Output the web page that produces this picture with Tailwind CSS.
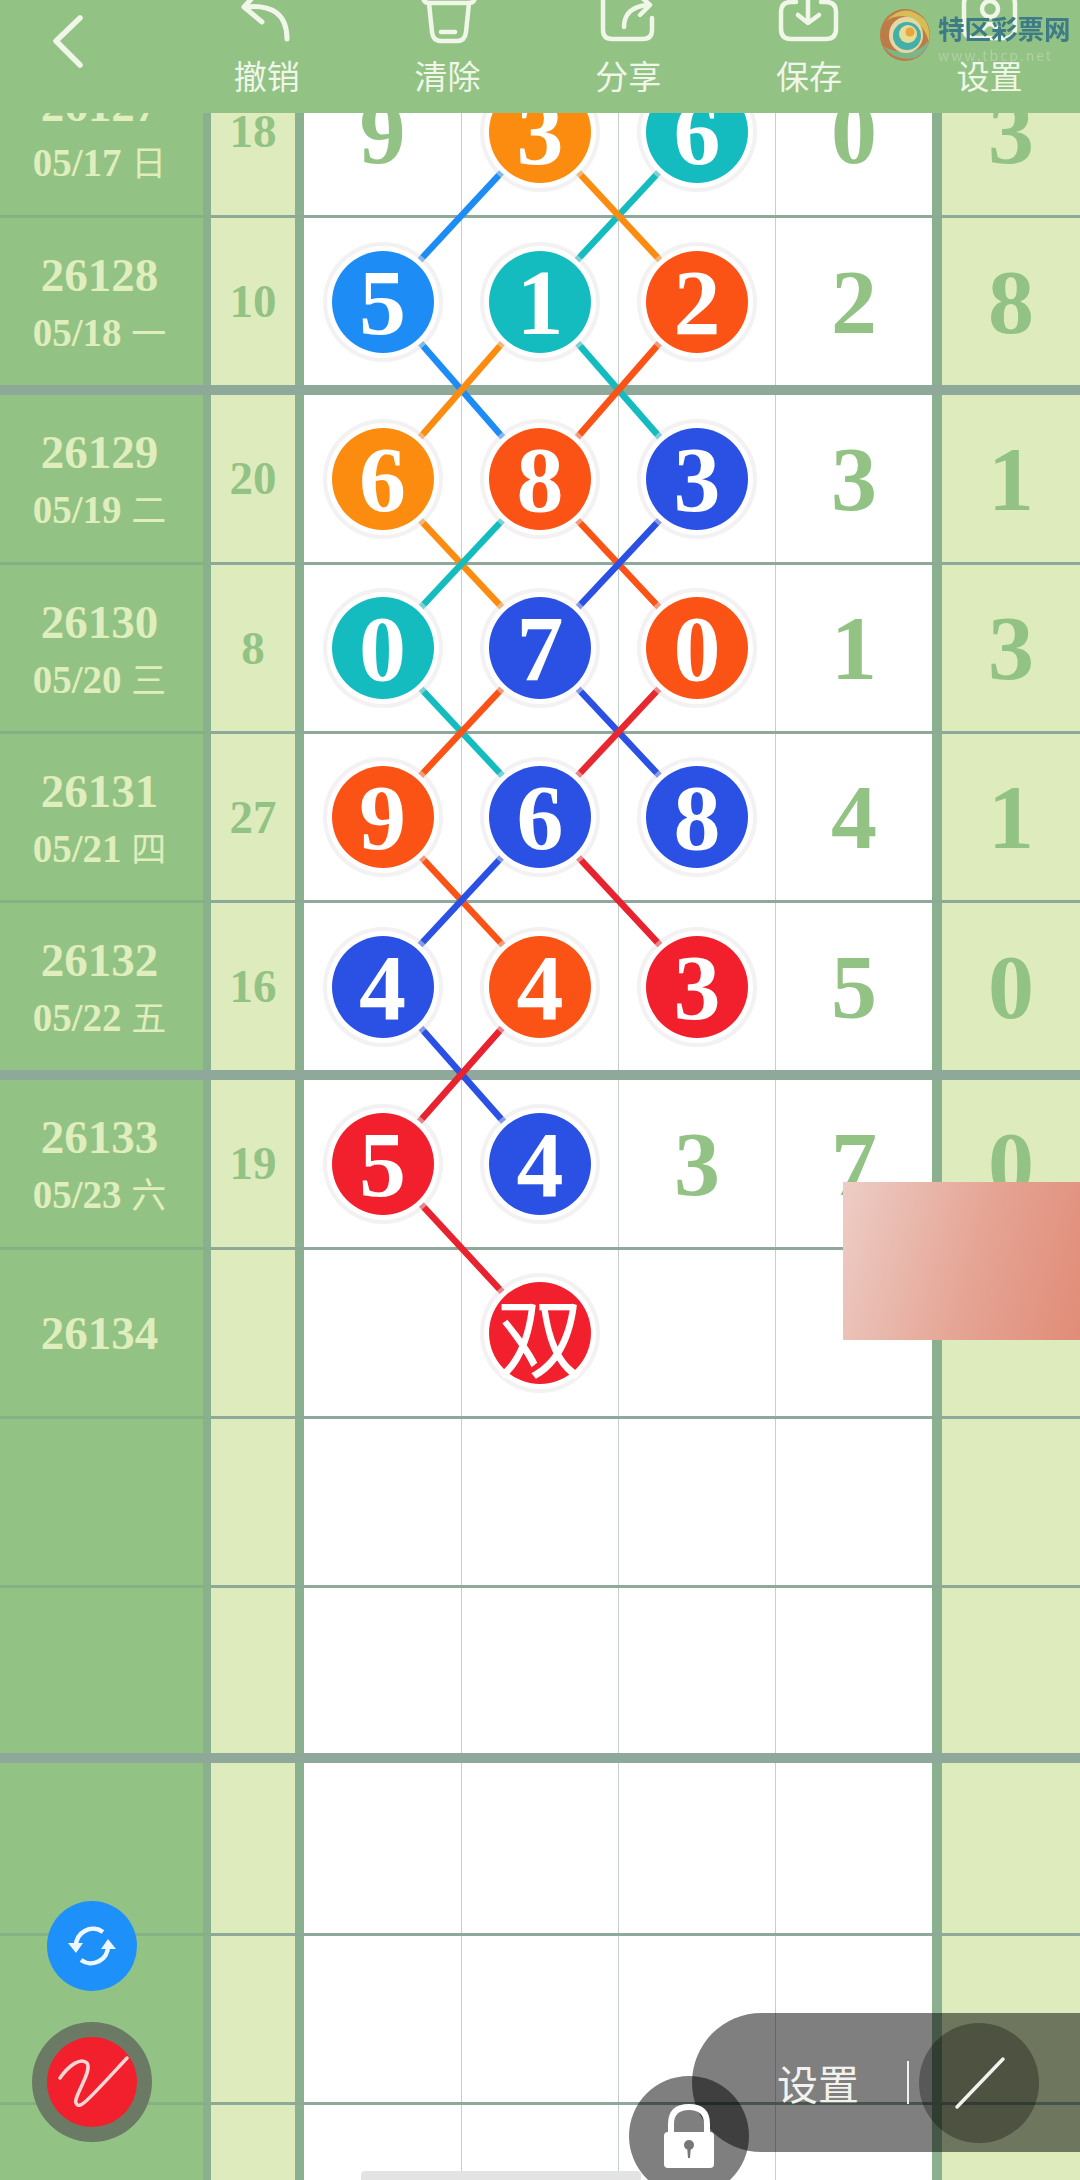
<!DOCTYPE html>
<html lang="zh">
<head>
    <meta charset="UTF-8">
    <meta name="viewport" content="width=device-width, initial-scale=1.0">
    <title>走势图</title>
    <script src="https://cdn.jsdelivr.net/npm/@tailwindcss/browser@4"></script>
</head>
<body class="bg-white">
    <div class="relative w-[1080px] h-[2180px] overflow-hidden bg-white [font-family:'Liberation_Serif','Noto_Sans_CJK_SC',serif]">

        <!-- Top toolbar, lies over the scrolled board -->
        <div class="absolute top-0 left-0 z-30 flex w-full h-[113px] overflow-hidden bg-[#93c285] text-[#f0f6e8] [font-family:'Noto_Sans_CJK_SC','Noto_Sans',sans-serif]">
            <div class="w-[177px] pl-[50px] pt-[14px]">
                <svg width="40" height="56" viewBox="0 0 40 56" fill="none" stroke="#f0f6e8" stroke-width="5.5" stroke-linecap="round" stroke-linejoin="round"><path d="M30 4 L6 27 L30 51"/></svg>
            </div>
            <div class="flex flex-col items-center w-[181.5px]">
                <svg class="overflow-visible" width="60" height="44" viewBox="0 0 60 44" fill="none" stroke="#f0f6e8" stroke-width="5" stroke-linecap="round" stroke-linejoin="round"><path d="M17 -4 L7 7 L25 22"/><path d="M8 7 C35 4 50 14 50 39"/></svg>
                <span class="mt-[6px] text-[33px] leading-[50px]">撤销</span>
            </div>
            <div class="flex flex-col items-center w-[181.5px]">
                <svg class="overflow-visible" width="60" height="44" viewBox="0 0 60 44" fill="none" stroke="#f0f6e8" stroke-width="4.5" stroke-linecap="round" stroke-linejoin="round"><path d="M5 -2 Q6 3 11 3 H51 Q56 3 57 -2"/><path d="M11 3 L14 32 Q15 41 23 41 H39 Q47 41 48 32 L51 3"/><path d="M23 32 H37"/></svg>
                <span class="mt-[6px] text-[33px] leading-[50px]">清除</span>
            </div>
            <div class="flex flex-col items-center w-[181.5px]">
                <svg class="overflow-visible" width="60" height="44" viewBox="0 0 60 44" fill="none" stroke="#f0f6e8" stroke-width="4.5" stroke-linecap="round" stroke-linejoin="round"><path d="M5 -6 V30 Q5 39 14 39 H45 Q54 39 54 30 V18"/><path d="M26 27 Q26 7 50 5"/><path d="M42 -4 L52 5 L42 15"/></svg>
                <span class="mt-[6px] text-[33px] leading-[50px]">分享</span>
            </div>
            <div class="flex flex-col items-center w-[181.5px]">
                <svg class="overflow-visible" width="60" height="44" viewBox="0 0 60 44" fill="none" stroke="#f0f6e8" stroke-width="4.5" stroke-linecap="round" stroke-linejoin="round"><path d="M17 2 H12 Q2 2 2 12 V29 Q2 39 12 39 H47 Q57 39 57 29 V12 Q57 2 47 2 H42"/><path d="M29 -5 V21"/><path d="M19 15 L29 23 L40 15"/></svg>
                <span class="mt-[6px] text-[33px] leading-[50px]">保存</span>
            </div>
            <div class="flex flex-col items-center w-[181.5px]">
                <svg class="overflow-visible" width="60" height="44" viewBox="0 0 60 44" fill="none" stroke="#f0f6e8" stroke-width="4.5" stroke-linecap="round" stroke-linejoin="round"><rect x="4" y="-6" width="51" height="44" rx="9"/><circle cx="30" cy="9" r="8"/><path d="M22 30 Q30 18 38 30"/></svg>
                <span class="mt-[6px] text-[33px] leading-[50px]">设置</span>
            </div>
        </div>

        <!-- Watermark logo -->
        <div class="absolute top-[8px] left-[879px] z-40 flex gap-[7px]">
            <svg width="52" height="54" viewBox="0 0 52 54">
                <ellipse cx="26" cy="27" rx="25" ry="26" fill="#bd7b45"/>
                <path d="M6 14 Q26 -8 46 12 Q52 22 50 34 Q44 12 24 8 Q12 8 6 14Z" fill="#d7bd58"/>
                <path d="M4 38 Q16 54 36 50 Q48 44 50 32 Q40 46 22 44 Q10 42 4 38Z" fill="#7db58a"/>
                <ellipse cx="27" cy="27" rx="17" ry="18" fill="#e3d9a6"/>
                <ellipse cx="28" cy="28" rx="14" ry="14" fill="#44aea8"/>
                <ellipse cx="29" cy="26" rx="9" ry="9" fill="#e5dc98"/>
                <ellipse cx="31" cy="24" rx="4.5" ry="4.5" fill="#e8a63a"/>
            </svg>
            <div class="flex flex-col w-[134px] blur-[0.5px] [font-family:'Noto_Sans_CJK_SC',sans-serif]">
                <span class="text-[26.5px] leading-[40px] font-bold whitespace-nowrap text-[#3d7b86]">特区彩票网</span>
                <span class="text-[14px] leading-[14px] tracking-[2px] whitespace-nowrap text-white/25">www.tbcp.net</span>
            </div>
        </div>

        <!-- Connecting lines between the balls -->
        <svg class="absolute top-0 left-0 z-10" width="1080" height="2180" viewBox="0 0 1080 2180" fill="none" stroke-width="6.5">
            <path stroke="#1e8cf5" d="M540 131 L383 300"/>
            <path stroke="#14bcc0" d="M697 131 L540 300"/>
            <path stroke="#fb8c10" d="M540 131 L697 300"/>
            <path stroke="#1e8cf5" d="M383 300 L540 480"/>
            <path stroke="#fb8c10" d="M540 300 L383 480"/>
            <path stroke="#14bcc0" d="M540 300 L697 480"/>
            <path stroke="#fb5316" d="M697 300 L540 480"/>
            <path stroke="#fb8c10" d="M383 480 L540 648"/>
            <path stroke="#14bcc0" d="M540 480 L383 648"/>
            <path stroke="#fb5316" d="M540 480 L697 648"/>
            <path stroke="#2a50e4" d="M697 480 L540 648"/>
            <path stroke="#14bcc0" d="M383 648 L540 816"/>
            <path stroke="#fb5316" d="M540 648 L383 816"/>
            <path stroke="#2a50e4" d="M540 648 L697 816"/>
            <path stroke="#e8282f" d="M697 648 L540 816"/>
            <path stroke="#fb5316" d="M383 816 L540 985"/>
            <path stroke="#2a50e4" d="M540 816 L383 985"/>
            <path stroke="#e8222f" d="M540 816 L697 985"/>
            <path stroke="#2a50e4" d="M383 985 L540 1163"/>
            <path stroke="#e8222f" d="M540 985 L383 1163"/>
            <path stroke="#e8222f" d="M383 1163 L540 1333"/>
        </svg>

        <!-- Board, rows are rendered below -->
        <div id="board" class="mt-[48px]"></div>

        <!-- Blurred patch -->
        <div class="absolute top-[1182px] left-[843px] z-30 w-[237px] h-[158px] bg-[linear-gradient(105deg,#edcdc6,#e5a494_55%,#e18c78)]"></div>

        <!-- Floating buttons -->
        <div class="absolute top-[1901px] left-[47px] z-30 flex items-center justify-center w-[90px] h-[90px] rounded-full bg-[#1e90fa]">
            <svg width="50" height="44" viewBox="-25 -22 50 44" fill="none" stroke="#eef6ff" stroke-width="4.5"><path d="M-16 0 A17 17 0 0 1 11 -14"/><path d="M16 0 A17 17 0 0 1 -11 14"/><path fill="#eef6ff" stroke="none" d="M-24 -3 H-9 L-16 7Z M24 3 H9 L16 -7Z"/></svg>
        </div>
        <div class="absolute top-[2022px] left-[32px] z-30 flex items-center justify-center w-[120px] h-[120px] rounded-full bg-[#6b7a65]">
            <div class="w-[90px] h-[90px] rounded-full bg-[#f21f2d]">
                <svg width="90" height="90" viewBox="0 0 90 90" fill="none" stroke="#f6d6d6" stroke-width="3.5" stroke-linecap="round"><path d="M13 41 C22 28 34 20 40 26 C46 34 26 60 29 66 C32 74 42 62 80 21"/></svg>
            </div>
        </div>

        <div class="absolute top-[2171px] left-[361px] z-20 w-[280px] h-[9px] rounded-t-[4px] bg-[#e3e3e3]"></div>

        <!-- Settings pill -->
        <div class="absolute top-[2013px] left-[692px] z-30 flex items-center w-[388px] h-[139px] pl-[85px] rounded-l-[70px] bg-black/50">
            <span class="w-[84px] text-[41px] leading-none text-[#f4f2ee] [font-family:'Noto_Sans_CJK_SC',sans-serif]">设置</span>
            <div class="ml-[46px] w-[2px] h-[43px] bg-[#f4f2ee]"></div>
            <div class="ml-[10px] flex items-center justify-center w-[120px] h-[120px] rounded-full bg-black/30">
                <svg width="60" height="60" viewBox="0 0 60 60" fill="none" stroke="#f4f2ee" stroke-width="3.5" stroke-linecap="round"><path d="M54 6 L8 54"/></svg>
            </div>
        </div>

        <!-- Lock button -->
        <div class="absolute top-[2076px] left-[629px] z-30 flex justify-center w-[120px] h-[120px] pt-[28px] rounded-full bg-black/50">
            <svg width="52" height="66" viewBox="0 0 52 66"><path d="M8 30 V20 Q8 3 26 3 Q44 3 44 20 V30" fill="none" stroke="#fff" stroke-width="6"/><rect x="1" y="28" width="50" height="36" rx="4" fill="#fff"/><circle cx="26" cy="41" r="5" fill="#777"/><path d="M24 42 H28 L27 54 H25Z" fill="#777"/></svg>
        </div>
    </div>

    <script>
        const blue = 'bg-[#1e8cf5]', teal = 'bg-[#14bcc0]', tomato = 'bg-[#fb5316]';
        const orange = 'bg-[#fb8c10]', navy = 'bg-[#2a50e4]', red = 'bg-[#f21f2d]';
        const thin = 'h-[169px] border-b-[3px]', first = 'h-[170px] border-b-[3px]', thick = 'h-[177px] border-b-[10px]';
        const sideLine = '-mb-[3px] border-b-[3px] border-b-[#85b185]';

        // [height, issue, date, day, sum, col1, col2, col3, col4, last], a ball is [digit, colour]
        const rows = [
            [first, '26127', '05/17', '日', '18', '9', ['3', orange], ['6', teal], '0', '3'],
            [thick, '26128', '05/18', '一', '10', ['5', blue], ['1', teal], ['2', tomato], '2', '8'],
            [first, '26129', '05/19', '二', '20', ['6', orange], ['8', tomato], ['3', navy], '3', '1'],
            [thin, '26130', '05/20', '三', '8', ['0', teal], ['7', navy], ['0', tomato], '1', '3'],
            [thin, '26131', '05/21', '四', '27', ['9', tomato], ['6', navy], ['8', navy], '4', '1'],
            [thick, '26132', '05/22', '五', '16', ['4', navy], ['4', tomato], ['3', red], '5', '0'],
            [first, '26133', '05/23', '六', '19', ['5', red], ['4', navy], '3', '7', '0'],
            [thin, '26134', '', '', '', '', ['双', red], '', '', ''],
            [thin, '', '', '', '', '', '', '', '', ''],
            ['h-[175px] border-b-[10px]', '', '', '', '', '', '', '', '', ''],
            ['h-[173px] border-b-[3px]', '', '', '', '', '', '', '', '', ''],
            [thin, '', '', '', '', '', '', '', '', ''],
            [thin, '', '', '', '', '', '', '', '', ''],
        ];

        function cell(value, extra) {
            let inner = '';
            if (Array.isArray(value)) {
                const isWord = value[0] === '双';
                inner = `<div class="relative z-20 flex items-center justify-center w-[102px] h-[102px] rounded-full shadow-[0_0_0_5px_#fff,0_0_0_9px_rgba(232,228,230,0.5)] text-white ${value[1]} ${isWord ? "text-[88px] [font-family:'Noto_Sans_CJK_SC',sans-serif]" : 'text-[94px] font-bold'} leading-none">${value[0]}</div>`;
            } else {
                inner = `<span class="text-[92px] font-bold leading-none text-[#93c285]">${value}</span>`;
            }
            return `<div class="flex items-center justify-center ${extra}">${inner}</div>`;
        }

        document.getElementById('board').innerHTML = rows.map(r => {
            const date = r[2] ? `<div class="text-[39px] leading-[55px] whitespace-nowrap">${r[2]} <span class="text-[35px] font-normal [font-family:'Noto_Sans_CJK_SC',sans-serif]">${r[3]}</span></div>` : '';
            const line = r[0].includes('border-b-[3px]') ? sideLine : '';
            return `<div class="grid grid-cols-[211px_93px_158px_157px_157px_156px_1fr] border-[#8ea99a] ${r[0]}">
                <div class="flex flex-col items-center justify-center pr-1 ${r[2] ? 'pt-[5px]' : ''} bg-[#93c285] border-r-[8px] border-[#8bb08f] ${line} text-[#dfeebc] font-bold">
                    <div class="text-[47px] leading-[55px]">${r[1]}</div>${date}
                </div>
                <div class="flex items-center justify-center bg-[#deecbd] border-r-[9px] border-[#8bb08f] text-[47px] font-bold leading-none text-[#93c285]">${r[4]}</div>
                ${cell(r[5], 'border-r border-[#c5d0cc]')}
                ${cell(r[6], 'border-r border-[#c5d0cc]')}
                ${cell(r[7], 'border-r border-[#c5d0cc]')}
                ${cell(r[8], '')}
                ${cell(r[9], 'bg-[#deecbd] border-l-[10px] border-[#8bb08f]')}
            </div>`;
        }).join('');
    </script>
</body>
</html>
